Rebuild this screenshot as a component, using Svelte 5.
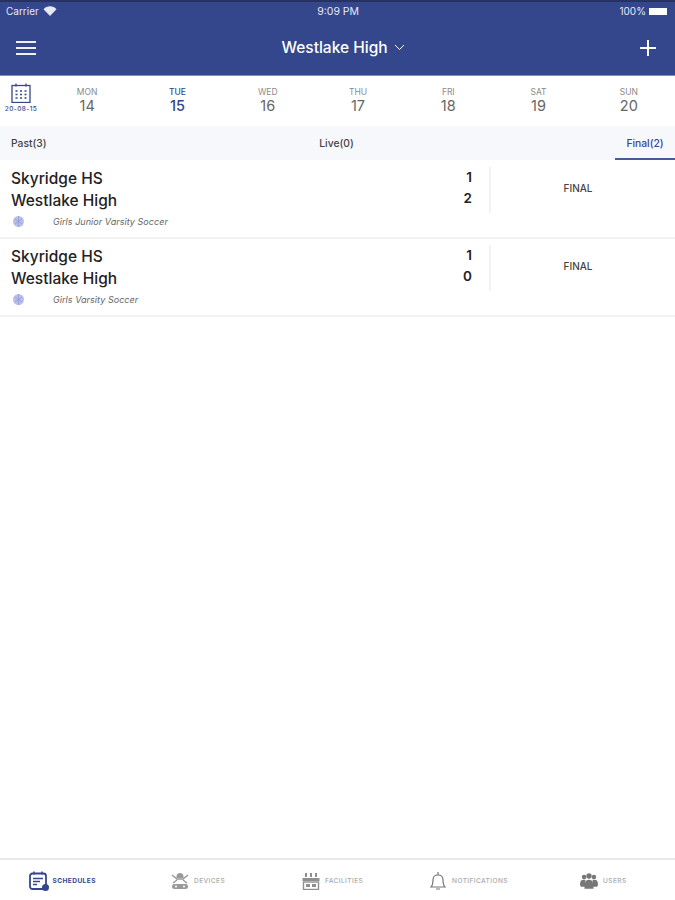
<script>
  const days = [
    { name: "MON", num: 14 },
    { name: "TUE", num: 15, active: true },
    { name: "WED", num: 16 },
    { name: "THU", num: 17 },
    { name: "FRI", num: 18 },
    { name: "SAT", num: 19 },
    { name: "SUN", num: 20 }
  ];

  const games = [
    { home: "Skyridge HS", away: "Westlake High", homeScore: 1, awayScore: 2, sport: "Girls Junior Varsity Soccer" },
    { home: "Skyridge HS", away: "Westlake High", homeScore: 1, awayScore: 0, sport: "Girls Varsity Soccer" }
  ];
</script>

<div class="page">
  <header class="top">
    <div class="status">
      <div class="status-left">
        <span>Carrier</span>
        <svg width="14" height="10" viewBox="0 0 14 10"><path d="M7 10 0.5 3.2C4.2-.6 9.8-.6 13.5 3.2Z" fill="#e6e9f5"/></svg>
      </div>
      <span class="clock">9:09 PM</span>
      <div class="status-right">
        <span>100%</span>
        <span class="battery"></span>
      </div>
    </div>
    <div class="nav">
      <div class="burger"><i></i><i></i><i></i></div>
      <div class="title">
        Westlake High
        <svg width="11" height="7" viewBox="0 0 11 7"><path d="M1 1l4.500 4.500L10 1" fill="none" stroke="#fff" stroke-width="1"/></svg>
      </div>
      <svg class="plus" width="16" height="16" viewBox="0 0 16 16"><path d="M8 0v16M0 8h16" stroke="#fff" stroke-width="2"/></svg>
    </div>
  </header>

  <div class="week">
    <div class="cal">
      <svg width="20" height="20" viewBox="0 0 20 20" fill="none" stroke="#34478c">
        <rect x="1" y="2.500" width="18" height="17" stroke-width="1.300"/>
        <path d="M5 0.500v3M15 0.500v3" stroke-width="1.300"/>
        <path d="M4.500 8h2M9 8h2M13.500 8h2M4.500 11.500h2M9 11.500h2M13.500 11.500h2M4.500 15h2M9 15h2M13.500 15h2" stroke-width="1.600"/>
      </svg>
      <span>20-08-15</span>
    </div>
    <div class="days">
      {#each days as d}
        <div class="day" class:active={d.active}>
          <span class="dname">{d.name}</span>
          <span class="dnum">{d.num}</span>
        </div>
      {/each}
    </div>
  </div>

  <div class="tabs">
    <div class="tab">Past(3)</div>
    <div class="tab mid">Live(0)</div>
    <div class="tab last">Final(2)</div>
  </div>

  <div class="list">
    {#each games as g}
      <div class="game">
        <div class="info">
          <div class="teams">
            <div class="team">{g.home}</div>
            <div class="team">{g.away}</div>
          </div>
          <div class="sport">
            <svg width="11" height="11" viewBox="0 0 11 11"><circle cx="5.500" cy="5.500" r="5.500" fill="#b9bfe6"/><path d="M2 3l7 5M9 3L2 8M5.500 0v11" stroke="#8d96d6" stroke-width="0.700"/></svg>
            <span>{g.sport}</span>
          </div>
        </div>
        <div class="scores">
          <div>{g.homeScore}</div>
          <div>{g.awayScore}</div>
        </div>
        <div class="result"><span>FINAL</span></div>
      </div>
    {/each}
  </div>

  <div class="spacer"></div>

  <nav class="bottom">
    <div class="item on">
      <svg width="20" height="20" viewBox="0 0 20 20" fill="none">
        <rect x="1" y="2.500" width="16" height="15.500" rx="2.500" stroke="#34478c" stroke-width="1.800"/>
        <path d="M5 0.500v3M13 0.500v3" stroke="#34478c" stroke-width="1.500"/>
        <path d="M4 7.500h10M4 10.500h7M4 13.500h4" stroke="#34478c" stroke-width="1.300"/>
        <circle cx="16.500" cy="16.500" r="3.500" fill="#34478c"/>
      </svg>
      <span>SCHEDULES</span>
    </div>
    <div class="item">
      <svg width="18" height="18" viewBox="0 0 18 18" fill="#9a9a9a">
        <path d="M1 3l5 4h6l5-4M2 11l4-3M16 11l-4-3" fill="none" stroke="#9a9a9a" stroke-width="1.500"/>
        <path d="M5.500 4.500a3.500 3.500 0 0 1 7 0v1.500h-7z"/>
        <rect x="1" y="12" width="16" height="5" rx="2.500"/>
        <circle cx="5" cy="14.500" r="1" fill="#fff"/>
        <circle cx="13" cy="14.500" r="1" fill="#fff"/>
      </svg>
      <span>DEVICES</span>
    </div>
    <div class="item">
      <svg width="18" height="18" viewBox="0 0 18 18" fill="#8f8f8f">
        <path d="M4 1v4M9 1v4M14 1v4" stroke="#8f8f8f" stroke-width="2"/>
        <rect x="0.500" y="6" width="17" height="3"/>
        <rect x="1.500" y="10" width="15" height="7.500" fill="none" stroke="#8f8f8f" stroke-width="1.400"/>
        <rect x="4" y="12" width="4" height="3"/>
        <rect x="10" y="12" width="4" height="3"/>
      </svg>
      <span>FACILITIES</span>
    </div>
    <div class="item bell">
      <svg width="16" height="20" viewBox="0 0 16 20" fill="none" stroke="#777" stroke-width="1.200">
        <path d="M1 16c2-2 2-4 2-7 0-3 2-5 5-5s5 2 5 5c0 3 0 5 2 7z"/>
        <path d="M8 1v3M6 18h4"/>
      </svg>
      <span>NOTIFICATIONS</span>
    </div>
    <div class="item">
      <svg width="18" height="18" viewBox="0 0 20 19" fill="#777">
        <circle cx="4.500" cy="5" r="2.500"/><circle cx="15.500" cy="5" r="2.500"/><circle cx="10" cy="4" r="3"/>
        <path d="M0 14c0-4 1-6 4-6l2 0v8H1zM20 14c0-4-1-6-4-6l-2 0v8h5z"/>
        <path d="M5 18c0-7 1-10 5-10s5 3 5 10z"/>
      </svg>
      <span>USERS</span>
    </div>
  </nav>
</div>

<style>
  :global(body) {
    margin: 0;
    background: #fff;
  }

  .page {
    display: flex;
    flex-direction: column;
    height: 900px;
    font-family: Inter, "Liberation Sans", sans-serif;
    color: #222;
    overflow: hidden;
  }

  .top {
    height: 76px;
    box-sizing: border-box;
    background: #34478c;
    border-top: 2px solid #27335f;
    border-bottom: 1px solid #7f8cb8;
    color: #fff;
  }

  .status {
    display: flex;
    align-items: center;
    justify-content: space-between;
    height: 18px;
    padding: 0 8px 0 6px;
    font-size: 10px;
    color: #e6e9f5;
  }

  .status-left, .status-right {
    display: flex;
    align-items: center;
    gap: 4px;
  }

  .status-right { gap: 3px; }

  .clock {
    font-size: 10.500px;
  }

  .battery {
    width: 18px;
    height: 7px;
    background: #fff;
  }

  .nav {
    display: flex;
    align-items: center;
    justify-content: space-between;
    height: 55px;
    padding: 0 19px 0 16px;
  }

  .burger {
    display: flex;
    flex-direction: column;
    gap: 4px;
    width: 20px;
  }

  .burger i {
    display: block;
    height: 2px;
    background: #eef0f8;
  }

  .title {
    display: flex;
    align-items: center;
    gap: 6px;
    font-size: 15.500px;
    font-weight: 500;
    margin-left: 10px;
  }

  .week {
    display: flex;
    height: 50px;
    background: #fff;
  }

  .cal {
    width: 42px;
    flex: none;
    display: flex;
    flex-direction: column;
    align-items: center;
    padding-top: 7px;
    box-sizing: border-box;
    color: #34478c;
  }

  .cal span {
    font-size: 6.500px;
    font-weight: 500;
    letter-spacing: 0.400px;
    margin-top: 2px;
  }

  .days {
    flex: 1;
    display: flex;
    padding-right: 1px;
  }

  .day {
    flex: 1;
    display: flex;
    flex-direction: column;
    align-items: center;
    padding-top: 12px;
    color: #666;
  }

  .dname {
    font-size: 8.500px;
    line-height: 9px;
    color: #8a8a8a;
  }

  .dnum {
    font-size: 14.500px;
    line-height: 18px;
  }

  .day.active .dname, .day.active .dnum {
    color: #34478c;
    font-weight: 500;
  }

  .tabs {
    display: grid;
    grid-template-columns: 1fr 1fr 1fr;
    height: 34px;
    background: #f6f8fb;
    font-size: 10.300px;
    color: #444;
  }

  .tab {
    display: flex;
    align-items: center;
    padding-left: 11px;
    padding-bottom: 1px;
    font-weight: 500;
  }

  .tab.mid {
    justify-content: center;
    padding-left: 0;
    padding-right: 2px;
  }

  .tab.last {
    justify-content: center;
    justify-self: end;
    width: 60px;
    padding-left: 0;
    color: #34478c;
    box-shadow: inset 0 -2px 0 #4a5b9b;
  }

  .list {
    padding-top: 1px;
  }

  .game {
    display: flex;
    height: 78px;
    box-sizing: border-box;
    border-bottom: 2px solid #f2f2f2;
  }

  .info {
    flex: 1;
    padding: 7px 0 0 11px;
  }

  .team {
    font-size: 15.500px;
    font-weight: 500;
    line-height: 22px;
    color: #222;
  }

  .sport {
    display: flex;
    align-items: center;
    gap: 29px;
    margin-top: 4px;
    padding-left: 2px;
    font-size: 9px;
    letter-spacing: 0.050px;
    font-style: italic;
    color: #666;
  }

  .scores {
    width: 18px;
    padding-top: 6px;
    font-size: 13.500px;
    font-weight: 600;
    line-height: 21px;
    text-align: right;
  }

  .result {
    width: 186px;
    height: 46px;
    margin-top: 6px;
    margin-left: 17px;
    border-left: 2px solid #f2f2f2;
    display: flex;
    align-items: center;
    justify-content: center;
    font-size: 10px;
    font-weight: 500;
    color: #444;
    padding: 0 10px 4px 0;
    box-sizing: border-box;
  }

  .spacer { flex: 1; }

  .bottom {
    height: 42px;
    border-top: 2px solid #e8e8e8;
    display: grid;
    grid-template-columns: 142.500px 131px 128px 150px 1fr;
    box-sizing: border-box;
    padding: 1px 0 0 28.500px;
  }

  .item {
    display: flex;
    align-items: center;
    gap: 5px;
    font-size: 6.600px;
    letter-spacing: 0.400px;
    color: #aaa;
    font-weight: 500;
  }

  .item.on {
    color: #34478c;
    font-weight: 700;
    gap: 4px;
  }

  .item.bell {
    gap: 6px;
  }
</style>
